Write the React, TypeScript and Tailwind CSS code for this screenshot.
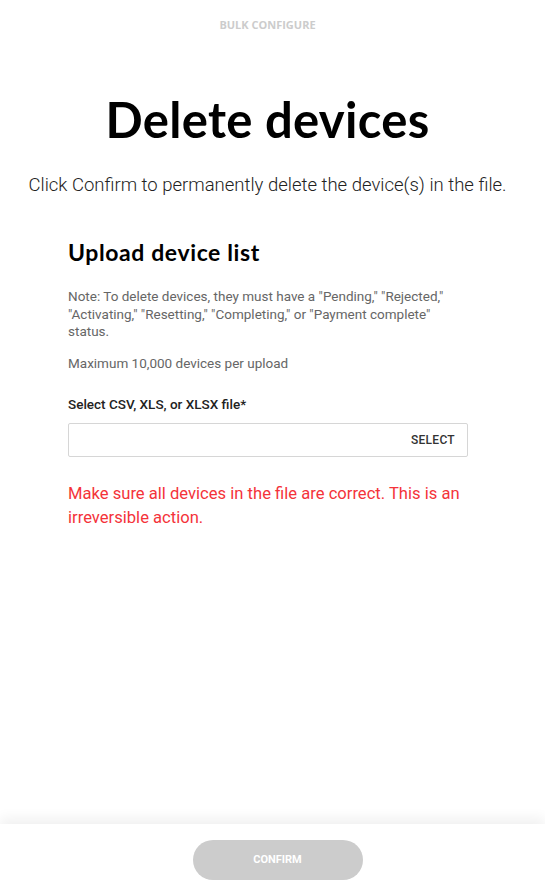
export default function App() {
  return (
    <div
      className="flex h-[893px] w-full flex-col overflow-hidden bg-white"
      style={{ fontFamily: '"Open Sans", "Noto Sans", sans-serif' }}
    >
      <main className="flex-1">
        <div className="pr-[10px] pt-[17px] text-center text-[11px] font-bold leading-4 text-[#cccccc]">BULK CONFIGURE</div>

        <h1 className="mt-[56px] pr-[10px] text-center font-['Lato',sans-serif] text-[49px] font-bold leading-[60px] tracking-[0.3px] text-black">
          Delete devices
        </h1>
        <p className="mt-[24px] pr-[10px] text-center font-['Roboto',sans-serif] text-[18.5px] font-light leading-6 text-[#222]">
          Click Confirm to permanently delete the device(s) in the file.
        </p>

        <section className="mx-[68px] mt-[41px] w-[400px]">
          <h2 className="font-['Lato',sans-serif] text-[23px] font-bold leading-7 tracking-[0.6px] text-black">Upload device list</h2>
          <p className="mt-[22px] font-['Roboto',sans-serif] text-[13.5px] leading-[17.5px] text-[#666]">
            Note: To delete devices, they must have a "Pending," "Rejected," "Activating," "Resetting," "Completing," or "Payment complete" status.
          </p>
          <p className="mt-[14px] font-['Roboto',sans-serif] text-[13.5px] leading-[17.5px] text-[#666]">
            Maximum 10,000 devices per upload
          </p>

          <label className="mt-[22px] block font-['Roboto',sans-serif] text-[13.5px] font-medium leading-5 text-[#222]">
            Select CSV, XLS, or XLSX file*
          </label>
          <div className="mt-[9px] flex h-[34px] items-center justify-end rounded-[2px] border border-[#d6d6d6] px-3">
            <button className="font-['Roboto',sans-serif] text-[12px] font-medium tracking-[0.3px] text-[#333]">SELECT</button>
          </div>

          <p className="mt-[25px] font-['Roboto',sans-serif] text-[16.6px] leading-6 text-[#f4333a]">
            Make sure all devices in the file are correct. This is an irreversible action.
          </p>
        </section>
      </main>

      <footer className="flex h-[69px] shrink-0 items-start justify-center bg-white pt-4 shadow-[0_-6px_12px_rgba(0,0,0,0.06)]">
        <button className="ml-[10px] h-10 w-[170px] rounded-full bg-[#cccccc] font-['Roboto',sans-serif] text-[11px] font-bold text-white">
          CONFIRM
        </button>
      </footer>
    </div>
  );
}
